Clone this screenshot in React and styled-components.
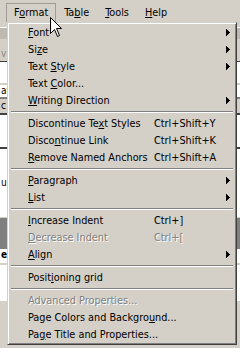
import React from "react";
import styled, { createGlobalStyle } from "styled-components";

const Global = createGlobalStyle`
  html, body { margin: 0; padding: 0; background: #d4d0c8; overflow: hidden; }
  * { box-sizing: border-box; }
`;

const FONT = `"DejaVu Sans Condensed", "DejaVu Sans", sans-serif`;

const Screen = styled.div`
  position: relative;
  width: 240px;
  height: 348px;
  overflow: hidden;
  background: #d4d0c8;
  font-family: ${FONT};
  font-stretch: condensed;
  font-size: 10.8px;
  color: #000;
`;

const MenuBar = styled.div`
  display: flex;
  height: 22px;
  padding: 3px 0 0 6px;
  background: #d4d0c8;
`;

const MenuTitle = styled.div`
  height: 19px;
  line-height: 18px;
  padding: 0 7px;
  border: 1px solid transparent;
  border-bottom: none;
  white-space: nowrap;
  ${(p) => p.$open && `border-color: #a09c94 #a09c94 transparent #a09c94;`}
`;

const Key = styled.span`
  text-decoration: underline;
  text-underline-offset: 1px;
`;

const Workspace = styled.div`
  display: flex;
  flex-direction: column;
  height: 326px;
`;

const Band = styled.div`
  height: ${(p) => p.$h}px;
  background: ${(p) => p.$bg};
  border-top: ${(p) => (p.$line ? `${p.$line}` : "none")};
  color: ${(p) => p.$fg || "#000"};
  font-weight: ${(p) => (p.$bold ? 700 : 400)};
  font-size: 10px;
  line-height: ${(p) => p.$h - 2}px;
  padding-left: 1px;
  white-space: nowrap;
`;

const Dropdown = styled.div`
  position: absolute;
  left: 7px;
  top: 22px;
  width: 230px;
  padding: 1px;
  background: #d4d0c8;
  border: 1px solid;
  border-color: #d4d0c8 #404040 #404040 #d4d0c8;
  box-shadow: inset 1px 1px 0 #ffffff, inset -1px -1px 0 #808080;
`;

const Item = styled.div`
  display: flex;
  align-items: center;
  height: 17px;
  line-height: 17px;
  padding-left: 19px;
  white-space: nowrap;
  color: ${(p) => (p.$disabled ? "#808080" : "#000")};
  text-shadow: ${(p) => (p.$disabled ? "1px 1px 0 #ffffff" : "none")};
`;

const Label = styled.span`
  width: 126px;
  flex: none;
`;

const Shortcut = styled.span`
  flex: 1;
`;

const Arrow = styled.svg`
  width: 4px;
  height: 7px;
  margin-right: 5px;
  flex: none;
  shape-rendering: crispEdges;
`;

const Separator = styled.div`
  height: 2px;
  margin: 2px 2px;
  border-top: 1px solid #808080;
  border-bottom: 1px solid #ffffff;
`;

const Cursor = styled.svg`
  position: absolute;
  left: 50px;
  top: 17px;
  width: 13px;
  height: 21px;
`;

const renderLabel = (text, k) => {
  if (k === undefined || k < 0) return text;
  return (
    <>
      {text.slice(0, k)}
      <Key>{text[k]}</Key>
      {text.slice(k + 1)}
    </>
  );
};

const menu = [
  { text: "Font", k: 0, sub: true },
  { text: "Size", k: 2, sub: true },
  { text: "Text Style", k: 5, sub: true },
  { text: "Text Color...", k: 5 },
  { text: "Writing Direction", k: 0, sub: true },
  { sep: true },
  { text: "Discontinue Text Styles", k: 14, sc: "Ctrl+Shift+Y" },
  { text: "Discontinue Link", k: 5, sc: "Ctrl+Shift+K" },
  { text: "Remove Named Anchors", k: 0, sc: "Ctrl+Shift+A" },
  { sep: true },
  { text: "Paragraph", k: 0, sub: true },
  { text: "List", k: 0, sub: true },
  { sep: true },
  { text: "Increase Indent", k: 0, sc: "Ctrl+]" },
  { text: "Decrease Indent", k: 0, sc: "Ctrl+[", disabled: true },
  { text: "Align", k: 0, sub: true },
  { sep: true },
  { text: "Positioning grid", k: 5 },
  { sep: true },
  { text: "Advanced Properties...", disabled: true },
  { text: "Page Colors and Background...", k: 23 },
  { text: "Page Title and Properties...", k: 2 },
];

const bands = [
  { h: 5, bg: "#d4d0c8" },
  { h: 12, bg: "#bdb9b1", line: "1px solid #ffffff" },
  { h: 10, bg: "#d4d0c8" },
  { h: 12, bg: "#d4d0c8", fg: "#8a8a8a", t: "v" },
  { h: 22, bg: "#ffffff", line: "1px solid #404040" },
  { h: 14, bg: "#ffffff", line: "2px solid #d4d0c8", t: "at" },
  { h: 16, bg: "#d4d0c8", line: "2px solid #808080", t: "c" },
  { h: 34, bg: "#ffffff", line: "2px solid #404040" },
  { h: 70, bg: "#ffffff", line: "2px solid #404040", t: "u" },
  { h: 32, bg: "#808080", line: "1px solid #d4d0c8" },
  { h: 14, bg: "#ffffff", bold: true, t: "e" },
  { h: 38, bg: "#ffffff", line: "2px solid #d4d0c8" },
  { h: 25, bg: "#d4d0c8" },
];

export default function App() {
  return (
    <Screen>
      <Global />
      <MenuBar>
        <MenuTitle $open>{renderLabel("Format", 1)}</MenuTitle>
        <MenuTitle>{renderLabel("Table", 2)}</MenuTitle>
        <MenuTitle>{renderLabel("Tools", 0)}</MenuTitle>
        <MenuTitle>{renderLabel("Help", 0)}</MenuTitle>
      </MenuBar>
      <Workspace>
        {bands.map((b, i) => (
          <Band key={i} $h={b.h} $bg={b.bg} $line={b.line} $fg={b.fg} $bold={b.bold}>
            {b.t}
          </Band>
        ))}
      </Workspace>
      <Dropdown>
        {menu.map((m, i) =>
          m.sep ? (
            <Separator key={i} />
          ) : (
            <Item key={i} $disabled={m.disabled}>
              <Label>{renderLabel(m.text, m.k)}</Label>
              <Shortcut>{m.sc}</Shortcut>
              {m.sub && (
                <Arrow viewBox="0 0 4 7">
                  <polygon points="0,0 4,3.5 0,7" fill="#000" />
                </Arrow>
              )}
            </Item>
          )
        )}
      </Dropdown>
      <Cursor viewBox="0 0 13 21">
        <polygon
          points="0.5,0.5 0.5,16.5 4.5,12.5 7.5,19.5 9.5,18.5 6.5,11.5 11.5,11.5"
          fill="#ffffff"
          stroke="#000000"
          strokeWidth="1"
        />
      </Cursor>
    </Screen>
  );
}
